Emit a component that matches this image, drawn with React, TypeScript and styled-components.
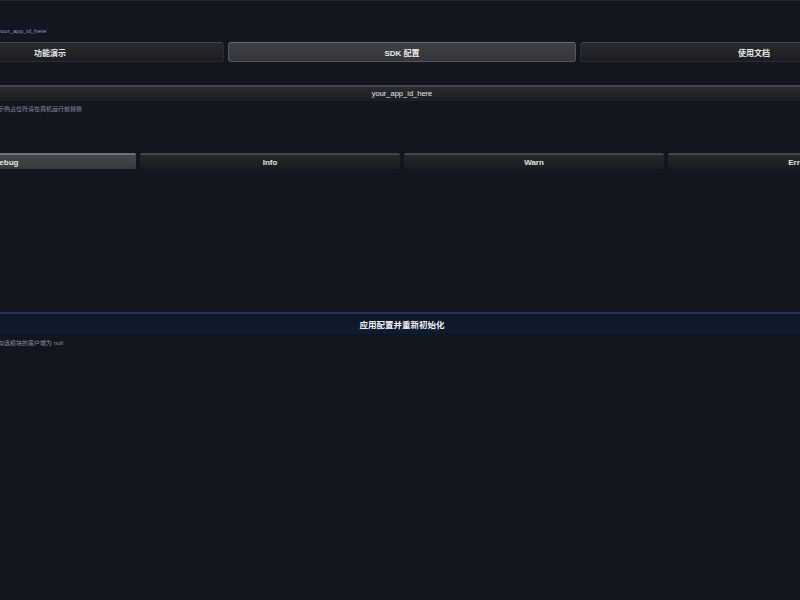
import React, { useState } from "react";
import styled, { createGlobalStyle } from "styled-components";

const GlobalStyle = createGlobalStyle`
  html, body {
    margin: 0;
    padding: 0;
    background: #13151f;
    overflow: hidden;
  }
  body {
    font-family: "Liberation Sans", "Noto Sans CJK SC", sans-serif;
  }
`;

const tabs = ["功能演示", "SDK 配置", "使用文档"];
const levels = ["Debug", "Info", "Warn", "Error"];

const App: React.FC = () => {
  const [tab, setTab] = useState(1);
  const [level, setLevel] = useState(0);

  return (
    <>
      <GlobalStyle />
      <Page>
        <Container>
          <Note>
            <Lead>当前 App ID：</Lead>your_app_id_here
          </Note>
          <TabBar>
            {tabs.map((t, i) => (
              <Tab key={t} active={i === tab} onClick={() => setTab(i)}>
                {t}
              </Tab>
            ))}
          </TabBar>
          <Input defaultValue="your_app_id_here" />
          <Hint>
            <Lead>提示：以上均为</Lead>示例占位符请在真机运行前替换
          </Hint>
          <Segments>
            {levels.map((l, i) => (
              <Segment key={l} active={i === level} onClick={() => setLevel(i)}>
                {l}
              </Segment>
            ))}
          </Segments>
          <ApplyButton>应用配置并重新初始化</ApplyButton>
          <Hint>
            <Lead>说明：未</Lead>勾选模块的客户端为 null
          </Hint>
        </Container>
      </Page>
    </>
  );
};

const Page = styled.div`
  width: 800px;
  height: 600px;
  border-top: 1px solid #262833;
  box-sizing: border-box;
`;

const Container = styled.div`
  width: 1052px;
  margin-left: -124px;
  display: flex;
  flex-direction: column;
`;

/* leading part of a note; sits in the column that is scrolled off to the left */
const Lead = styled.span`
  display: inline-block;
  width: 122px;
  text-align: right;
  overflow: hidden;
  vertical-align: top;
`;

const Note = styled.div`
  margin-top: 26px;
  font-size: 6px;
  line-height: 8px;
  color: #8b96c0;
  white-space: nowrap;
`;

const TabBar = styled.div`
  display: grid;
  grid-template-columns: repeat(3, 1fr);
  gap: 4px;
  margin-top: 7px;
`;

const Tab = styled.button<{ active: boolean }>`
  height: 20px;
  padding: 0;
  border-radius: 3px;
  border: 1px solid ${(p) => (p.active ? "#55575c" : "#2c2d31")};
  border-top-color: ${(p) => (p.active ? "#6a6c71" : "#45464a")};
  background: ${(p) =>
    p.active
      ? "linear-gradient(#3f4044, #35363a)"
      : "linear-gradient(#2a2b2e, #1b1c1f)"};
  color: #e8e8ea;
  font-family: inherit;
  font-size: 8px;
  font-weight: bold;
  cursor: pointer;
`;

const Input = styled.input`
  margin-top: 23px;
  height: 16px;
  box-sizing: border-box;
  border: none;
  border-top: 2px solid #45464b;
  background: linear-gradient(#2a2b2f, #1c1d21);
  color: #e6e6ea;
  font-family: inherit;
  font-size: 7.5px;
  line-height: 13px;
  text-align: center;
  outline: none;
  padding: 0 0 1px;
`;

const Hint = styled.div`
  margin-top: 4px;
  font-size: 6px;
  line-height: 8px;
  color: #8a8fa3;
  white-space: nowrap;

  & + & {
    margin-top: 3px;
  }
`;

const Segments = styled.div`
  display: grid;
  grid-template-columns: repeat(4, 1fr);
  gap: 4px;
  margin-top: 40px;
`;

const Segment = styled.button<{ active: boolean }>`
  height: 16px;
  padding: 0;
  border-radius: 2px;
  border: none;
  border-top: 2px solid ${(p) => (p.active ? "#707176" : "#45464a")};
  background: ${(p) =>
    p.active
      ? "linear-gradient(#45464a, #38393d)"
      : "linear-gradient(#26272a, #1a1b1e)"};
  color: #e4e4e6;
  font-family: inherit;
  font-size: 8px;
  font-weight: bold;
  cursor: pointer;
`;

const ApplyButton = styled.button`
  margin-top: 143px;
  height: 23px;
  padding: 0;
  border: none;
  border-top: 2px solid #1d3557;
  border-bottom: 1px solid #0c1422;
  background: linear-gradient(#0d1626, #0f1c30);
  color: #f0f2f6;
  font-family: inherit;
  font-size: 8.5px;
  font-weight: bold;
  cursor: pointer;
`;

export default App;
